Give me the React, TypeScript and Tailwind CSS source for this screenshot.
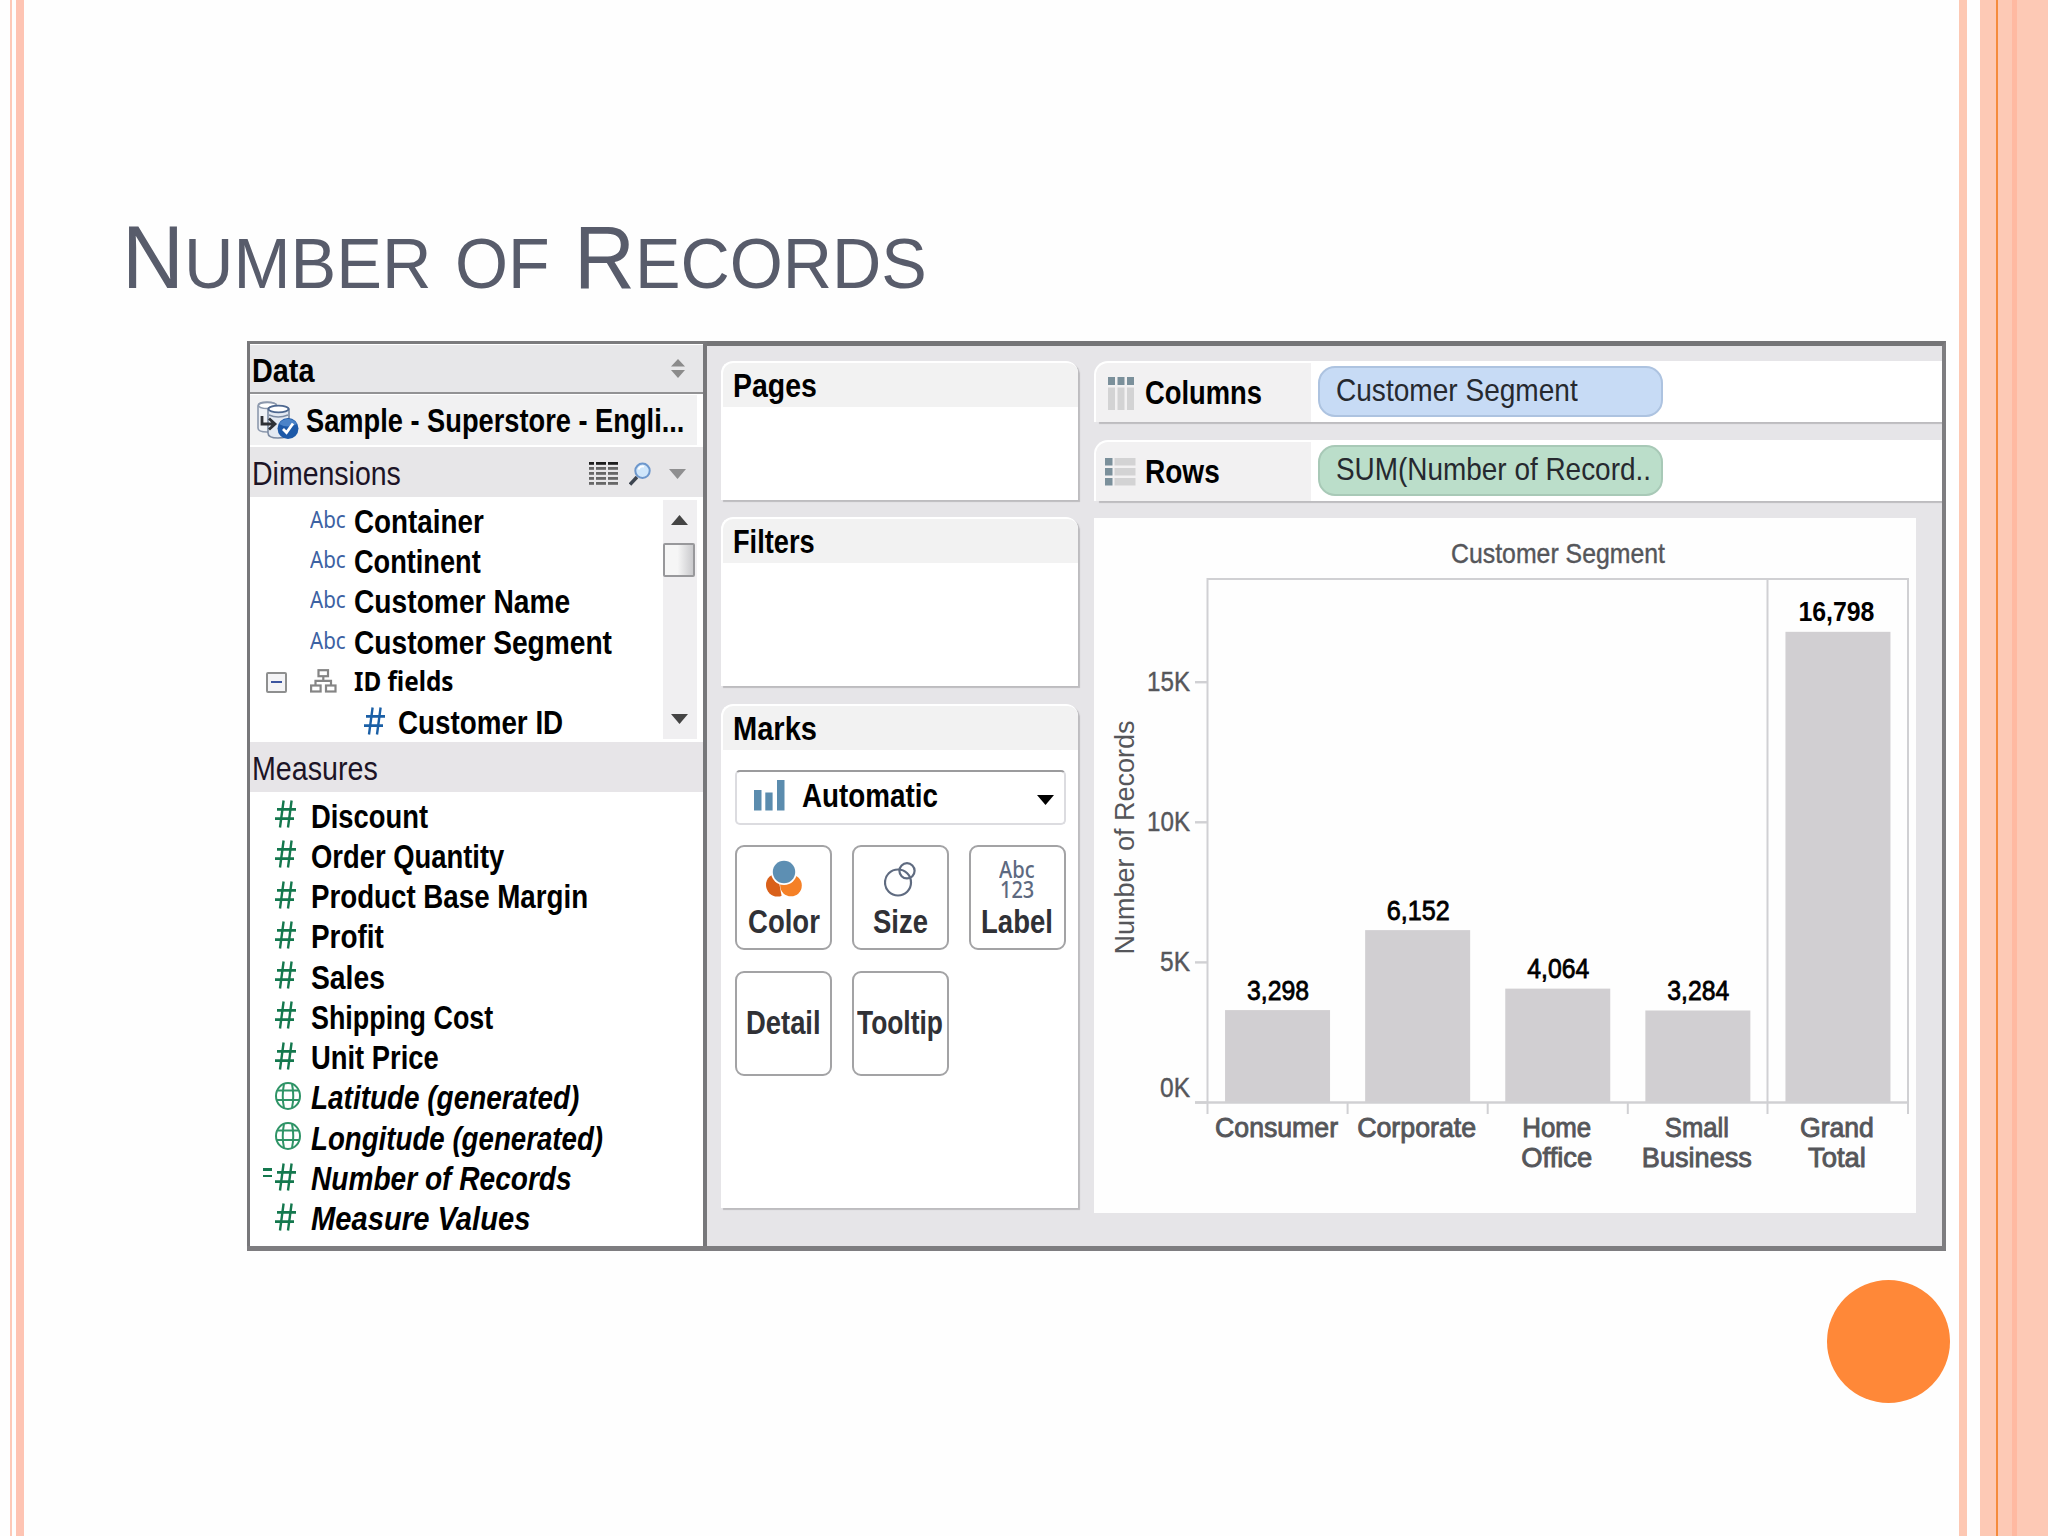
import { useLayoutEffect, useRef, useState, type ReactNode } from 'react';
import clsx from 'clsx';

type TextProps = {
  children: string;
  width: number;
  className?: string;
};

// single line of text, squeezed or stretched to a given width
function FitText({ children, width, className }: TextProps) {
  const ref = useRef<HTMLSpanElement>(null);
  const [scale, setScale] = useState(1);

  useLayoutEffect(() => {
    if (ref.current) setScale(width / ref.current.offsetWidth);
  }, [children, width]);

  return (
    <span className="block shrink-0 whitespace-pre" style={{ width }}>
      <span
        ref={ref}
        className={clsx('inline-block origin-left', className)}
        style={{ transform: `scaleX(${scale})` }}
      >
        {children}
      </span>
    </span>
  );
}

const bold = 'text-[32.5px] leading-10 font-bold text-black';
const plain = 'text-[32.5px] leading-10 text-[#1c1426]';

function HashIcon({ className }: { className?: string }) {
  return (
    <svg
      width="21"
      height="28"
      viewBox="0 0 21 28"
      fill="none"
      stroke="currentColor"
      className={clsx('mb-[5px] shrink-0', className)}
    >
      <path d="M2 9.3H21M0 18.7H19" strokeWidth="2.8" />
      <path d="M8.6 0.5L5 27.5M16.6 0.5L13 27.5" strokeWidth="2.4" />
    </svg>
  );
}

function GlobeIcon() {
  return (
    <svg
      width="27"
      height="28"
      viewBox="0 0 27 28"
      fill="none"
      stroke="#2f9467"
      strokeWidth="2"
      className="mb-[5px] shrink-0"
    >
      <ellipse cx="13" cy="14" rx="12" ry="13" />
      <path d="M3 8.5H23M1 18H25M9 2Q6.5 14 9 26M17 2Q19.5 14 17 26" />
    </svg>
  );
}

function DatabaseIcon() {
  return (
    <svg width="43" height="40" viewBox="0 0 43 40" fill="none">
      <path
        d="M2 5Q2 1 11 1T21 5V27Q20 31 11 31T2 27Z"
        fill="#eef1f6"
        stroke="#8d99ad"
        strokeWidth="1.6"
      />
      <ellipse cx="11.5" cy="4.5" rx="9" ry="3" fill="#fff" stroke="#8d99ad" strokeWidth="1.4" />
      <path
        d="M12 8Q12 5 22 5T33 8V32Q32 37 22 37T12 32Z"
        fill="#e3e9f2"
        stroke="#7b8aa2"
        strokeWidth="1.6"
      />
      <ellipse cx="22.5" cy="8" rx="10" ry="3.4" fill="#fff" stroke="#4d678f" strokeWidth="1.8" />
      <path d="M13 14Q22 18 32 14" stroke="#7b8aa2" strokeWidth="1.4" />
      <path d="M6 15V23H18M13 17.5L19 23L13 28.5" stroke="#2e3137" strokeWidth="2.8" />
      <circle cx="32" cy="27.5" r="10.5" fill="#1d59a8" />
      <path d="M23 23A10.5 10.5 0 0 1 41 23Q32 28 23 23Z" fill="#4b83c8" />
      <path d="M27 28L30.5 31.5L37 22.5" stroke="#fff" strokeWidth="2.8" />
    </svg>
  );
}

function ListIcon() {
  return (
    <svg width="29" height="24" viewBox="0 0 29 24">
      {[0, 5, 10, 15, 20].map((y, i) => (
        <g key={y} fill={i === 0 ? '#1d1d1d' : '#676767'}>
          <rect x="0" y={y} width="5" height="2.8" />
          <rect x="7" y={y} width="10" height="2.8" />
          <rect x="19" y={y} width="10" height="2.8" />
        </g>
      ))}
    </svg>
  );
}

function SearchIcon() {
  return (
    <svg width="22" height="24" viewBox="0 0 22 24" fill="none">
      <path d="M1 22.5L8 15" stroke="#3d4550" strokeWidth="3.4" />
      <circle cx="13.5" cy="8.8" r="7.2" fill="#cfe6fb" stroke="#6d97cc" strokeWidth="2" />
      <path d="M9.5 7.5A4.5 4.5 0 0 1 15 4.6" stroke="#fff" strokeWidth="2" />
    </svg>
  );
}

function HierarchyIcon() {
  return (
    <svg
      width="27"
      height="24"
      viewBox="0 0 27 24"
      fill="none"
      stroke="#858585"
      strokeWidth="2.2"
      className="mb-1"
    >
      <rect x="8.5" y="1.2" width="9.5" height="6" />
      <rect x="1.1" y="16.5" width="9.5" height="6" />
      <rect x="16" y="16.5" width="9.5" height="6" />
      <path d="M13.3 7.5V11.8M5.5 16V11.8H21V16" />
    </svg>
  );
}

type Dimension = { name: string; width: number };

const dimensions: Dimension[] = [
  { name: 'Container', width: 130 },
  { name: 'Continent', width: 127 },
  { name: 'Customer Name', width: 216 },
  { name: 'Customer Segment', width: 258 },
];

type Measure = {
  name: string;
  width: number;
  icon?: 'hash' | 'globe' | 'calc';
  generated?: boolean;
};

const measures: Measure[] = [
  { name: 'Discount', width: 117 },
  { name: 'Order Quantity', width: 193 },
  { name: 'Product Base Margin', width: 277 },
  { name: 'Profit', width: 73 },
  { name: 'Sales', width: 74 },
  { name: 'Shipping Cost', width: 182 },
  { name: 'Unit Price', width: 128 },
  { name: 'Latitude (generated)', width: 268, icon: 'globe', generated: true },
  { name: 'Longitude (generated)', width: 292, icon: 'globe', generated: true },
  { name: 'Number of Records', width: 261, icon: 'calc', generated: true },
  { name: 'Measure Values', width: 219, generated: true },
];

function DataPane() {
  return (
    <div className="flex w-[460px] shrink-0 flex-col border-t-[3px] border-r-4 border-l-[3px] border-t-[#7b7b7d] border-r-[#77777a] border-l-[#77777a] bg-white">
      <div className="flex h-[48px] items-center justify-between border-t border-white bg-[#e7e7e9] pt-[4px] pr-[18px] pl-[2px]">
        <FitText width={62} className={bold}>
          Data
        </FitText>
        <svg width="14" height="19" viewBox="0 0 14 19" fill="#8b8b8b" className="mb-[5px]">
          <path d="M7 0L14 7.5H0ZM0 11H14L7 19Z" />
        </svg>
      </div>
      <div className="h-[2px] bg-[#929294]" />

      <div className="mt-px mr-[6px] flex h-[50px] items-center bg-[#f1f1f2] pt-px pl-[6px]">
        <DatabaseIcon />
        <div className="ml-[7px]">
          <FitText width={378} className={bold}>
            Sample - Superstore - Engli...
          </FitText>
        </div>
      </div>

      <div className="mt-[2px] flex h-[50px] items-center bg-[#e7e6e8] pt-[3px] pl-[2px]">
        <FitText width={149} className={plain}>
          Dimensions
        </FitText>
        <div className="ml-auto flex items-center pr-[17px]">
          <ListIcon />
          <div className="mr-[18px] ml-[11px]">
            <SearchIcon />
          </div>
          <svg width="17" height="10" viewBox="0 0 17 10" fill="#8f8f90">
            <path d="M0 0H17L8.5 10Z" />
          </svg>
        </div>
      </div>

      <div className="flex h-[245px] shrink-0 overflow-hidden">
        <div className="flex-1 pt-[4.5px]">
          {dimensions.map((d) => (
            <div key={d.name} className="flex h-[40.3px] items-center pl-[60px]">
              <div className="w-[44px] pb-[6px] font-['Noto_Sans']">
                <FitText width={36} className="text-[24px] leading-8 text-[#3d62a3]">
                  Abc
                </FitText>
              </div>
              <FitText width={d.width} className={bold}>
                {d.name}
              </FitText>
            </div>
          ))}
          <div className="flex h-[40.3px] items-center pl-[16px]">
            <div className="mb-px flex size-[21px] items-center justify-center rounded-xs border-2 border-[#8e8f8f] bg-[#f4f4f6]">
              <div className="h-[2px] w-[11px] bg-[#3c55a0]" />
            </div>
            <div className="w-[44px] pl-[23px]">
              <HierarchyIcon />
            </div>
            <div className="pb-[4px] pl-[23px] font-['Noto_Sans']">
              <FitText width={99} className="text-[26px] leading-8 font-bold text-black">
                ID fields
              </FitText>
            </div>
          </div>
          <div className="flex h-[40.3px] items-center pl-[114px]">
            <HashIcon className="text-[#1a5fa6]" />
            <div className="ml-[13px]">
              <FitText width={165} className={bold}>
                Customer ID
              </FitText>
            </div>
          </div>
        </div>
        <div className="mt-[3px] mr-[6px] mb-[3px] flex w-[34px] flex-col items-center bg-[#f0eff1]">
          <svg width="17" height="10" viewBox="0 0 17 10" className="mt-[15px] mr-px shrink-0" fill="#444">
            <path d="M0 10H17L8.5 0Z" />
          </svg>
          <div className="mt-[18px] mr-[2px] h-[34px] w-[32px] shrink-0 rounded-xs border-2 border-[#98989b] bg-linear-to-r from-[#f6f6f6] from-45% to-[#cacacd]" />
          <svg
            width="17"
            height="10"
            viewBox="0 0 17 10"
            className="mt-auto mr-px mb-[15px] shrink-0"
            fill="#444"
          >
            <path d="M0 0H17L8.5 10Z" />
          </svg>
        </div>
      </div>

      <div className="flex h-[50px] shrink-0 items-center bg-[#e7e5e8] pt-[3px] pl-[2px]">
        <FitText width={126} className={plain}>
          Measures
        </FitText>
      </div>

      <div className="pt-[4.5px]">
        {measures.map((m) => (
          <div key={m.name} className="flex h-[40.27px] items-center pl-[13px]">
            <div className="flex h-[22px] w-[12px] flex-col gap-[4px]">
              {m.icon === 'calc' && (
                <>
                  <span className="h-[2.5px] w-[9px] bg-[#14784e]" />
                  <span className="h-[2.5px] w-[9px] bg-[#14784e]" />
                </>
              )}
            </div>
            <div className="w-[36px]">
              {m.icon === 'globe' ? <GlobeIcon /> : <HashIcon className="text-[#14784e]" />}
            </div>
            <FitText width={m.width} className={clsx(bold, m.generated && 'italic')}>
              {m.name}
            </FitText>
          </div>
        ))}
      </div>
    </div>
  );
}

type CardProps = {
  title: string;
  titleWidth: number;
  className?: string;
  children?: ReactNode;
};

function ShelfCard({ title, titleWidth, className, children }: CardProps) {
  return (
    <div
      className={clsx(
        'flex flex-col rounded-t-[12px] border-t-2 border-l-2 border-white bg-white shadow-[2px_2px_1px_#bdbcbf]',
        className,
      )}
    >
      <div className="flex h-[44px] shrink-0 items-center rounded-t-[10px] bg-[#f2f2f2] pt-px pl-[10px]">
        <FitText width={titleWidth} className={bold}>
          {title}
        </FitText>
      </div>
      {children}
    </div>
  );
}

const markText = 'text-[32.5px] leading-10 font-bold text-[#303136]';

function MarkButton({
  label,
  width,
  children,
}: {
  label: string;
  width: number;
  children?: ReactNode;
}) {
  return (
    <div
      className={clsx(
        'flex h-[105px] flex-col items-center rounded-[9px] border-2 border-[#a3a3a5] bg-white',
        children ? 'justify-start pt-[13px]' : 'justify-center pb-[2px]',
      )}
    >
      {children && <div className="flex h-[42px] items-start justify-center">{children}</div>}
      <FitText width={width} className={markText}>
        {label}
      </FitText>
    </div>
  );
}

function MarksCard() {
  return (
    <ShelfCard title="Marks" titleWidth={84} className="mt-[18px] h-[504px]">
      <div className="pt-[20px] pr-[12px] pl-[12px]">
        <div className="flex h-[55px] items-center rounded-[5px] border-2 border-[#dcdce0] border-t-[#9b9b9d] bg-white pr-[10px] pb-[3px] pl-[17px]">
          <svg width="31" height="31" viewBox="0 0 31 31" fill="#5b8cae" className="mb-[2px]">
            <rect x="0" y="10" width="7.5" height="20.5" />
            <rect x="11.3" y="12.5" width="7.3" height="18" />
            <rect x="23" y="0" width="7.5" height="30.5" />
          </svg>
          <div className="ml-[17px]">
            <FitText width={136} className={bold}>
              Automatic
            </FitText>
          </div>
          <svg width="17" height="10" viewBox="0 0 17 10" className="mt-[8px] ml-auto">
            <path d="M0 0H17L8.5 10Z" />
          </svg>
        </div>

        <div className="mt-[20px] grid grid-cols-3 gap-x-[19.5px] gap-y-[21px]">
          <MarkButton label="Color" width={72}>
            <svg width="36" height="38" viewBox="0 0 36 38">
              <circle cx="11.5" cy="25" r="11.5" fill="#d9601a" />
              <path d="M13 22L16 38H36V14H20Z" fill="#fff" />
              <circle cx="25" cy="25.5" r="10.8" fill="#f58026" />
              <circle cx="18" cy="12" r="13" fill="#fff" />
              <circle cx="18" cy="12" r="11.2" fill="#5d8fb3" />
            </svg>
          </MarkButton>
          <MarkButton label="Size" width={55}>
            <svg
              width="32"
              height="38"
              viewBox="0 0 32 38"
              fill="none"
              stroke="#5f6b80"
              strokeWidth="2.2"
            >
              <circle cx="14" cy="22.5" r="13" />
              <circle cx="23" cy="10.8" r="7.6" />
            </svg>
          </MarkButton>
          <MarkButton label="Label" width={72}>
            <div className="-mt-px flex flex-col items-center font-['Noto_Sans'] text-[23.5px] leading-[20px] font-medium text-[#5d6980]">
              <FitText width={36}>Abc</FitText>
              <FitText width={34}>123</FitText>
            </div>
          </MarkButton>
          <MarkButton label="Detail" width={75} />
          <MarkButton label="Tooltip" width={86} />
        </div>
      </div>
    </ShelfCard>
  );
}

function Shelf({
  title,
  titleWidth,
  icon,
  pill,
}: {
  title: string;
  titleWidth: number;
  icon: ReactNode;
  pill: ReactNode;
}) {
  return (
    <div className="flex h-[61px] items-center rounded-tl-[14px] border-t-2 border-l-2 border-white bg-white shadow-[5px_2px_1px_#bdbcbf]">
      <div className="flex h-full w-[215px] items-center rounded-tl-[12px] bg-[#f2f1f2] pt-px">
        <div className="flex w-[49px] justify-center">{icon}</div>
        <FitText width={titleWidth} className={bold}>
          {title}
        </FitText>
      </div>
      {pill}
    </div>
  );
}

const bars = [
  { value: 3298, text: '3,298', textWidth: 62, labels: [['Consumer', 123]] },
  { value: 6152, text: '6,152', textWidth: 63, labels: [['Corporate', 119]] },
  { value: 4064, text: '4,064', textWidth: 62, labels: [['Home', 69], ['Office', 71]] },
  { value: 3284, text: '3,284', textWidth: 62, labels: [['Small', 64], ['Business', 110]] },
  { value: 16798, text: '16,798', textWidth: 76, labels: [['Grand', 74], ['Total', 58]] },
] as const;

const ticks = [
  { value: 15000, text: '15K', textWidth: 43, dy: 9 },
  { value: 10000, text: '10K', textWidth: 43, dy: 9 },
  { value: 5000, text: '5K', textWidth: 30, dy: 9 },
  { value: 0, text: '0K', textWidth: 30, dy: -6 },
];

const LEFT = 113.5;
const BASE = 584.5;
const STEP = 140.1;

function Chart() {
  const y = (v: number) => BASE - (v * 140.1) / 5000;

  return (
    <svg width="822" height="695" viewBox="0 0 822 695" className="block bg-[#fefefe]">
      <text
        x="464"
        y="44.5"
        fontSize="28"
        fill="#55565a"
        stroke="#55565a"
        strokeWidth="0.4"
        textAnchor="middle"
        textLength="214"
        lengthAdjust="spacingAndGlyphs"
      >
        Customer Segment
      </text>
      <text
        transform="translate(39.5 319.5) rotate(-90)"
        fontSize="28.5"
        fill="#55565a"
        textAnchor="middle"
        textLength="234"
        lengthAdjust="spacingAndGlyphs"
      >
        Number of Records
      </text>

      <g stroke="#d0d0d3" strokeWidth="2" fill="none">
        <path d={`M${LEFT} 596V61H814V596`} />
        <path d="M673.5 61V596" />
        {[1, 2, 3].map((i) => (
          <path key={i} d={`M${LEFT + STEP * i} ${BASE}V596`} />
        ))}
      </g>

      {ticks.map((t) => (
        <g key={t.value}>
          <path d={`M101 ${y(t.value)}H${LEFT}`} stroke="#d0d0d3" strokeWidth="2.4" />
          <text
            x="96"
            y={y(t.value) + t.dy}
            fontSize="28"
            fill="#55565a"
            stroke="#55565a"
            strokeWidth="0.4"
            textAnchor="end"
            textLength={t.textWidth}
            lengthAdjust="spacingAndGlyphs"
          >
            {t.text}
          </text>
        </g>
      ))}

      {bars.map((b, i) => {
        const cx = LEFT + STEP * (i + 0.5);
        const total = i === bars.length - 1;
        return (
          <g key={b.text} textAnchor="middle" fontSize="28">
            <rect x={cx - 52.5} y={y(b.value)} width="105" height={BASE - y(b.value)} fill="#d1cfd2" />
            <text
              x={total ? cx - 1.5 : cx + 0.5}
              y={y(b.value) - 10.5}
              textLength={b.textWidth}
              lengthAdjust="spacingAndGlyphs"
              fontWeight={total ? 700 : 400}
              stroke="#000"
              strokeWidth={total ? 0 : 0.8}
            >
              {b.text}
            </text>
            {b.labels.map(([label, width], line) => (
              <text
                key={label}
                x={cx - 1}
                y={619 + line * 30}
                fill="#55565a"
                stroke="#55565a"
                strokeWidth="0.9"
                textLength={width}
                lengthAdjust="spacingAndGlyphs"
              >
                {label}
              </text>
            ))}
          </g>
        );
      })}
      <path d={`M101 ${BASE}H815`} stroke="#d0d0d3" strokeWidth="2.4" />
    </svg>
  );
}

function ColumnsIcon() {
  return (
    <svg width="26" height="33" viewBox="0 0 26 33">
      {[0, 9.5, 19].map((x) => (
        <g key={x}>
          <rect x={x} y="0" width="7" height="8" fill="#7b909b" />
          <rect x={x} y="10.5" width="7" height="22.5" fill="#d3d3d4" />
        </g>
      ))}
    </svg>
  );
}

function RowsIcon() {
  return (
    <svg width="31" height="28" viewBox="0 0 31 28">
      {[0, 10, 20].map((y) => (
        <g key={y}>
          <rect x="0" y={y} width="7.5" height="7.5" fill="#7b909b" />
          <rect x="9.5" y={y} width="21" height="7.5" fill="#d3d3d4" />
        </g>
      ))}
    </svg>
  );
}

const pillText = 'text-[32px] leading-10 text-[#26292f]';

function Workspace() {
  return (
    <div className="flex flex-1 border-t-[5px] border-r-4 border-t-[#757577] border-r-[#7e7d80] bg-[#e6e5e8]">
      <div className="ml-[14px] w-[357px] pt-[15px]">
        <ShelfCard title="Pages" titleWidth={84} className="h-[139px]" />
        <ShelfCard title="Filters" titleWidth={82} className="mt-[17px] h-[169px]" />
        <MarksCard />
      </div>

      <div className="ml-[16px] flex-1 overflow-hidden pt-[15px]">
        <Shelf
          title="Columns"
          titleWidth={117}
          icon={<ColumnsIcon />}
          pill={
            <div className="mb-[2px] ml-[7px] flex h-[51px] w-[345px] items-center rounded-[17px] border-2 border-[#adc3e0] bg-[#c7dbf5] pb-[3px] pl-[16px]">
              <FitText width={242} className={pillText}>
                Customer Segment
              </FitText>
            </div>
          }
        />
        <div className="h-[18px]" />
        <Shelf
          title="Rows"
          titleWidth={75}
          icon={<RowsIcon />}
          pill={
            <div className="mb-[2px] ml-[7px] flex h-[51px] w-[345px] items-center rounded-[17px] border-2 border-[#a8c9b7] bg-[#bbdeca] pb-[3px] pl-[16px]">
              <FitText width={315} className={pillText}>
                SUM(Number of Record..
              </FitText>
            </div>
          }
        />
        <div className="mt-[17px]">
          <Chart />
        </div>
      </div>
    </div>
  );
}

const bigCap = 'text-[88.5px] leading-[102px]';
const smallCap = 'text-[71px] leading-[102px]';

export default function App() {
  return (
    <div className="flex h-[1536px] w-[2048px] overflow-hidden bg-[#fefefe] font-['Liberation_Sans',Arial,sans-serif]">
      <div className="ml-[10px] w-[2px] bg-[#fdc9b8]" />
      <div className="ml-[4px] w-[8px] bg-[#fec4b3]" />

      <div className="flex w-[1935px] flex-col pt-[207px]">
        <h1 className="flex h-[134px] items-baseline gap-[24px] pl-[98px] text-[#585c6b]">
          <span className="flex items-baseline">
            <FitText width={62} className={bigCap}>
              N
            </FitText>
            <FitText width={247} className={smallCap}>
              UMBER
            </FitText>
          </span>
          <FitText width={95} className={smallCap}>
            OF
          </FitText>
          <span className="flex items-baseline">
            <FitText width={61} className={bigCap}>
              R
            </FitText>
            <FitText width={292} className={smallCap}>
              ECORDS
            </FitText>
          </span>
        </h1>

        <div className="ml-[223px] flex h-[910px] w-[1699px] shrink-0 border-b-[5px] border-[#7e7d80]">
          <DataPane />
          <Workspace />
        </div>

        <div className="mt-[29px] mr-[9px] size-[123px] self-end rounded-full bg-[#ff8838]" />
      </div>

      <div className="w-[8px] bg-[#fdc8b3]" />
      <div className="ml-[13px] w-[16px] bg-[#fdc9b5]" />
      <div className="w-[2px] bg-[#f58b3c]" />
      <div className="w-[14px] bg-[#fdc9b5]" />
      <div className="w-[5px] bg-[#ffb9a1]" />
      <div className="flex-1 bg-[#fdc9b5]" />
    </div>
  );
}
